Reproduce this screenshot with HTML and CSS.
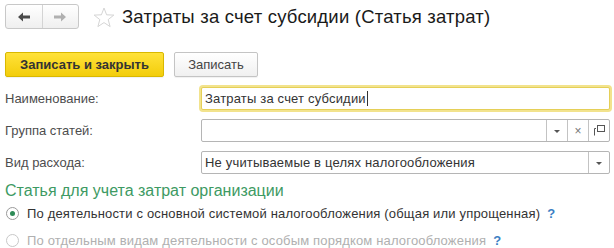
FILE: index.html
```html
<!DOCTYPE html>
<html lang="ru">
<head>
<meta charset="utf-8">
<link rel="stylesheet" href="styles.css">
</head>
<body>
<div class="page">
  <div class="header">
    <div class="nav">
      <div class="nav-btn">
        <svg width="14" height="10" viewBox="0 0 14 10"><path d="M1 5 L6 0.5 L6 3.5 L13 3.5 L13 6.5 L6 6.5 L6 9.5 Z" fill="#4a4a4a"/></svg>
      </div>
      <div class="nav-btn">
        <svg width="14" height="10" viewBox="0 0 14 10"><path d="M13 5 L8 0.5 L8 3.5 L1 3.5 L1 6.5 L8 6.5 L8 9.5 Z" fill="#b0b0b0"/></svg>
      </div>
    </div>
    <svg class="star" width="22" height="21" viewBox="0 0 22 21"><path d="M11 1 L13.6 7.8 L20.8 8.1 L15.2 12.6 L17.1 19.6 L11 15.6 L4.9 19.6 L6.8 12.6 L1.2 8.1 L8.4 7.8 Z" fill="none" stroke="#cfcfcf" stroke-width="0.9"/></svg>
    <div class="title">Затраты за счет субсидии (Статья затрат)</div>
  </div>

  <div class="toolbar">
    <div class="btn btn-primary">Записать и закрыть</div>
    <div class="btn">Записать</div>
  </div>

  <div class="form">
    <div class="label">Наименование:</div>
    <div class="field focused"><span class="val">Затраты за счет субсидии</span><span class="caret"></span></div>

    <div class="label">Группа статей:</div>
    <div class="field">
      <span class="val"></span>
      <span class="fbtn"><span class="tri"></span></span>
      <span class="fbtn x">×</span>
      <span class="fbtn">
        <svg width="11" height="11" viewBox="0 0 11 11"><rect x="3.5" y="0.5" width="7" height="6" fill="none" stroke="#555"/><path d="M0.5 3.5 V10.5 M0.5 3.5 H2" stroke="#555" fill="none"/></svg>
      </span>
    </div>

    <div class="label">Вид расхода:</div>
    <div class="field">
      <span class="val">Не учитываемые в целях налогообложения</span>
      <span class="fbtn"><span class="tri"></span></span>
    </div>
  </div>

  <div class="section">Статья для учета затрат организации</div>

  <div class="radios">
    <div class="radio">
      <span class="circle on"></span>
      <span class="rtext">По деятельности с основной системой налогообложения (общая или упрощенная)</span>
      <span class="help">?</span>
    </div>
    <div class="radio disabled">
      <span class="circle"></span>
      <span class="rtext">По отдельным видам деятельности с особым порядком налогообложения</span>
      <span class="help">?</span>
    </div>
  </div>
</div>
</body>
</html>
```

FILE: styles.css
```css
* { box-sizing: border-box; }
html, body { margin: 0; padding: 0; background: #fff; }
body {
  font-family: "Liberation Sans", Arial, sans-serif;
  font-size: 13px;
  color: #333;
  width: 614px;
  height: 248px;
  overflow: hidden;
}
.page { padding: 4px 4px 0 5px; }

.header { display: flex; align-items: center; height: 25px; }
.nav {
  display: flex;
  width: 74px;
  height: 25px;
  border: 1px solid #c8c8c8;
  border-radius: 3px;
  background: linear-gradient(#ffffff, #efefef);
}
.nav-btn { flex: 1; display: flex; align-items: center; justify-content: center; }
.nav-btn + .nav-btn { border-left: 1px solid #d4d4d4; }
.star { margin-left: 14px; margin-top: 2px; }
.title { margin-left: 7px; font-size: 18.5px; letter-spacing: 0.2px; color: #1a1a1a; line-height: 25px; }

.toolbar { display: flex; gap: 10px; margin-top: 23px; }
.btn {
  height: 25px;
  padding: 0 14px;
  border: 1px solid #c4c4c4;
  border-radius: 2px;
  background: linear-gradient(#ffffff, #f0f0f0);
  line-height: 23px;
  color: #444;
  font-size: 13px;
  box-shadow: 0 1px 1px rgba(0,0,0,0.06);
}
.btn-primary {
  width: 159px;
  padding: 0;
  text-align: center;
  background: linear-gradient(#ffe23a, #f3cd0b);
  border-color: #d9b800;
  color: #333;
  font-weight: bold;
}
.toolbar .btn:not(.btn-primary) { width: 84px; padding: 0; text-align: center; }

.form {
  display: grid;
  grid-template-columns: 196px 409px;
  row-gap: 9px;
  margin-top: 10px;
  align-items: center;
}
.label { color: #4d4d4d; font-size: 13px; }
.field {
  display: flex;
  align-items: stretch;
  height: 23px;
  border: 1px solid #b5b5b5;
  border-radius: 2px;
  background: #fff;
}
.field .val { flex: 1; padding-left: 3px; line-height: 21px; color: #333; white-space: nowrap; letter-spacing: 0.18px; }
.field.focused {
  border-color: #e5cf57;
  box-shadow: 0 0 0 2px #f2e38d;
}
.field.focused .val { flex: none; }
.caret { width: 1px; height: 15px; background: #333; align-self: center; margin-left: 1px; }
.fbtn {
  width: 21px;
  border-left: 1px solid #c3c3c3;
  display: flex;
  align-items: center;
  justify-content: center;
}
.fbtn.x { color: #777; font-size: 12px; }
.tri {
  width: 0; height: 0;
  border-left: 3px solid transparent;
  border-right: 3px solid transparent;
  border-top: 3px solid #555;
  margin-top: 1px;
}

.section {
  margin-top: 7px;
  font-size: 16px;
  line-height: 20px;
  color: #3d9a63;
}
.radios { display: flex; flex-direction: column; gap: 7px; margin-top: 2px; }
.radio { display: flex; align-items: center; height: 20px; }
.circle {
  width: 13px; height: 13px;
  border: 1px solid #9a9a9a;
  border-radius: 50%;
  margin-left: 1px;
  background: #fff;
  display: flex; align-items: center; justify-content: center;
}
.circle.on::after {
  content: "";
  width: 5px; height: 5px;
  border-radius: 50%;
  background: #2e8b57;
}
.rtext { margin-left: 8px; color: #333; letter-spacing: 0.17px; }
.help { margin-left: 7px; color: #3b7fc4; font-weight: bold; font-size: 13px; }
.radio.disabled .circle { border-color: #c8c8c8; }
.radio.disabled .rtext { color: #b0b0b0; }
.radio.disabled .help { color: #3b7fc4; }
```
